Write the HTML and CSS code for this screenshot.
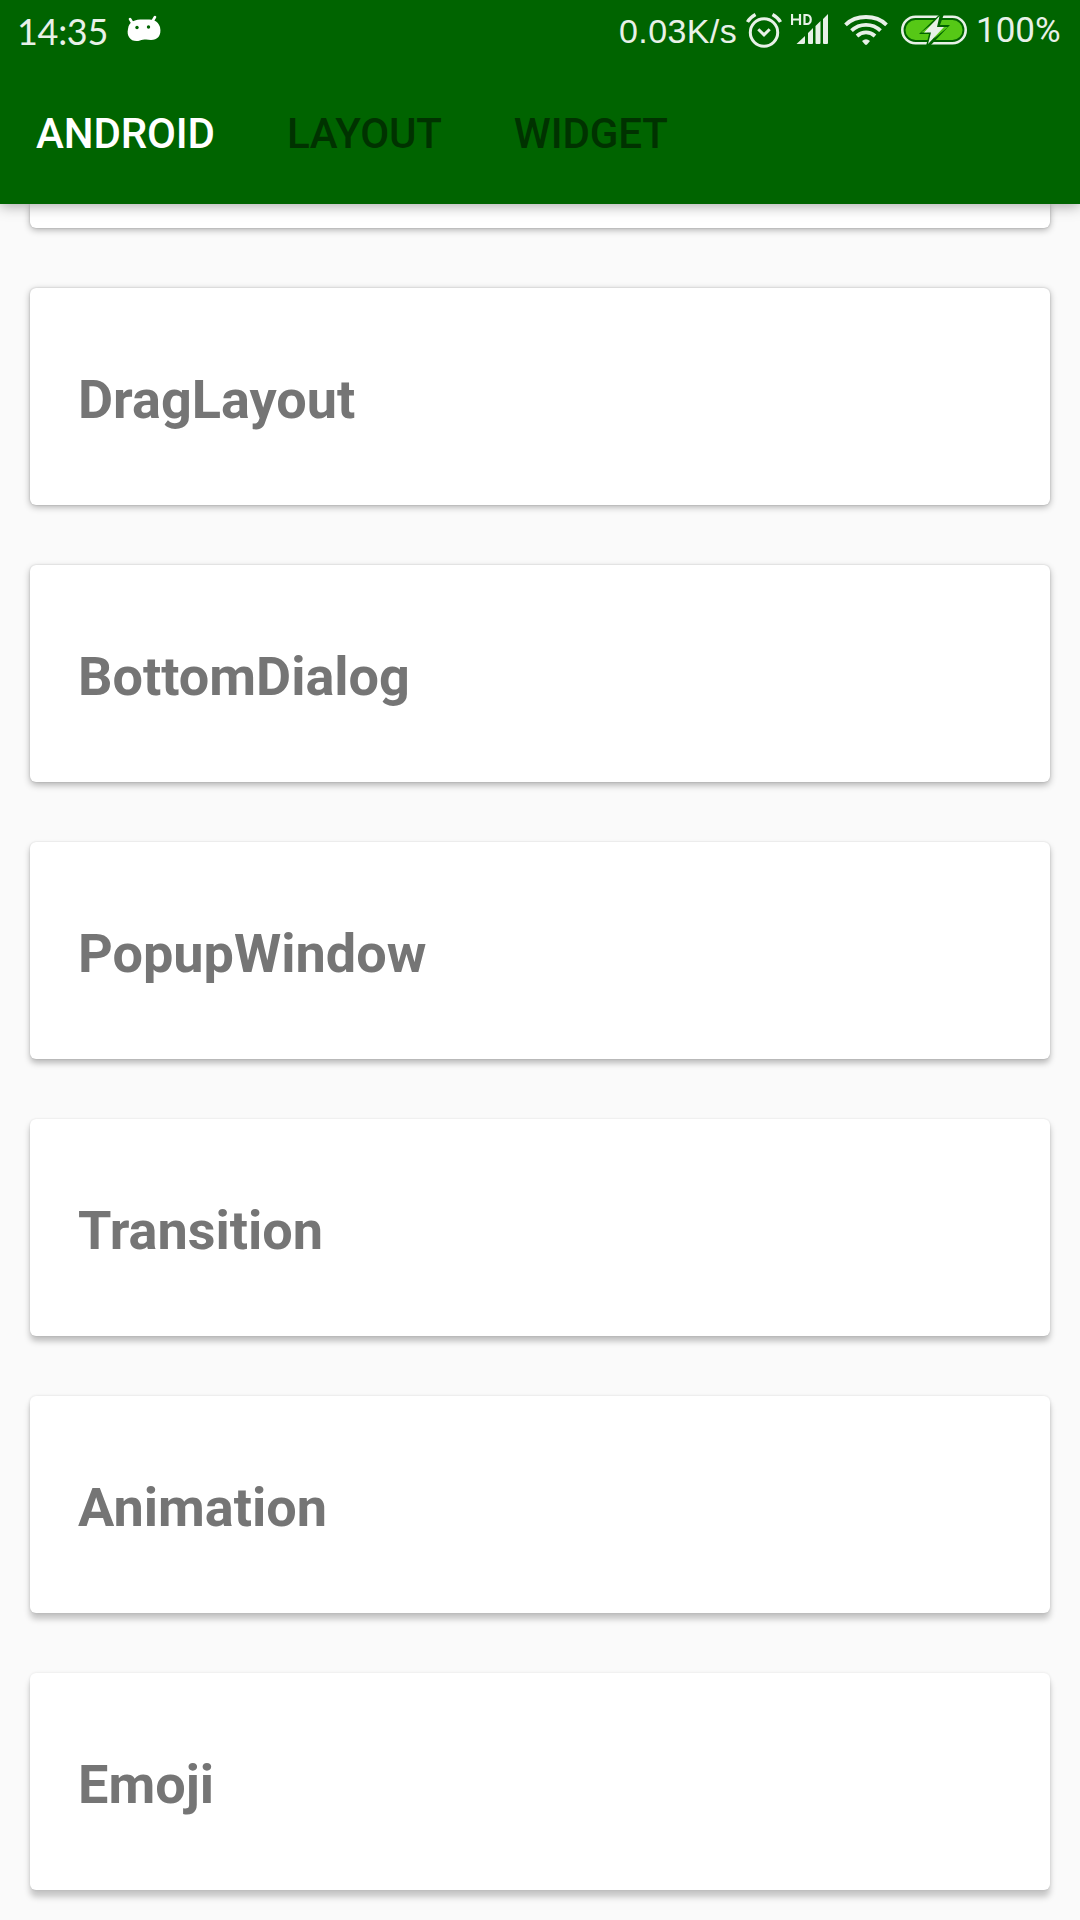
FILE: index.html
```html
<!DOCTYPE html>
<html lang="en">
<head>
<meta charset="utf-8">
<title>Android</title>
<link rel="stylesheet" href="styles.css">
</head>
<body>
<header class="appbar">
  <div class="status">
    <span class="clock">14:35</span>
    <svg class="droid" width="36" height="28" viewBox="0 0 36 28">
      <path d="M4 4l3 5M29 2l-3 5" stroke="#fff" stroke-width="2.6" stroke-linecap="round"/>
      <path d="M2 14C3 6 9 4.500 17 4.500S31 3.500 34 12C36 21 31 25 25 25C20 24 17 24.500 14 25.500C6 28 0 22 2 14Z" fill="#fff"/>
      <circle cx="11" cy="12.500" r="1.700" fill="#006400"/><circle cx="22.500" cy="12" r="1.700" fill="#006400"/>
    </svg>
    <span class="speed">0.03K/s</span>
    <svg class="alarm" width="36" height="36" viewBox="0 0 36 36" fill="none" stroke="#e8f1e8" stroke-width="3">
      <circle cx="18" cy="20.500" r="13.700"/>
      <path d="M1.500 10Q4 5.500 9.500 2.500M26.500 2.500Q32 5.500 34.500 10" stroke-width="3.400"/>
      <path d="M12.300 17.200l5.700 5.600 5.700-5.600" stroke-width="3"/>
    </svg>
    <svg class="signal" width="38" height="34" viewBox="0 0 38 34" fill="#e8f1e8">
      <path d="M1 2v11M9 2v11M1 7.500h8M13.500 3v9h2.500c5 0 5-9 0-9z" fill="none" stroke="#e8f1e8" stroke-width="2.200"/>
      <path d="M5.500 32L14 24v6.500q0 1.500-1.500 1.500zM17 21l5-5v15q0 1-1 1h-3q-1 0-1-1zM24.500 14l5-5v22q0 1-1 1h-3q-1 0-1-1zM32 7l5-5v29q0 1-1 1h-3q-1 0-1-1z"/>
    </svg>
    <svg class="wifi" width="44" height="32" viewBox="0 0 44 32" fill="none" stroke="#e8f1e8" stroke-width="3.800">
      <path d="M1.500 10.800Q9.500 3 22 3T42.500 10.800M7.500 16.700Q13.500 10.800 22 10.800T36.500 16.700M13 22Q17 18.400 22 18.400T31 22"/>
      <path d="M18 27Q22 23.500 26 27L23 30.600Q22 31.500 21 30.600Z" fill="#e8f1e8" stroke="none"/>
    </svg>
    <svg class="battery" width="66" height="30" viewBox="0 0 66 30">
      <rect x="1.300" y="1.800" width="63.400" height="26.400" rx="13.200" fill="none" stroke="#e8f1e8" stroke-width="2.600"/>
      <rect x="4.500" y="5" width="57" height="20" rx="10" fill="#56c816"/>
      <path d="M39 -1L18 19H28L25 31H29L49 10H39L43 -1Z" fill="#006400"/>
      <path d="M33 7.500L20 17.500H26L28.500 14ZM33 23.500L47 12H40L37 15Z" fill="#56c816"/>
      <path d="M38.500 1L23 17.500H30L27 29L43 12H36Z" fill="#e8f1e8"/>
    </svg>
    <span class="percent">100%</span>
  </div>
  <nav class="tabs">
    <span class="tab active">ANDROID</span>
    <span class="tab">LAYOUT</span>
    <span class="tab">WIDGET</span>
  </nav>
</header>
<main class="list">
  <div class="card peek"></div>
  <div class="card lift1">DragLayout</div>
  <div class="card lift2">BottomDialog</div>
  <div class="card lift3">PopupWindow</div>
  <div class="card lift4">Transition</div>
  <div class="card lift5">Animation</div>
  <div class="card lift6">Emoji</div>
</main>
</body>
</html>
```
FILE: styles.css
```css
* { box-sizing: border-box; }
body {
  margin: 0;
  width: 1080px;
  height: 1920px;
  overflow: hidden;
  background: #fafafa;
  font-family: Roboto, sans-serif;
}
.appbar {
  position: relative;
  z-index: 1;
  height: 204px;
  background: #006400;
  box-shadow: 0 2px 13px rgba(0, 0, 0, .34);
}
.status {
  display: flex;
  align-items: flex-start;
  height: 96px;
  color: #e8f1e8;
  white-space: nowrap;
}
.clock, .speed, .percent { line-height: 40px; }
.clock {
  width: 109px;
  padding-left: 17px;
  margin-top: 11px;
  font-family: Lato, sans-serif;
  font-size: 36px;
  letter-spacing: -.3px;
}
.droid { margin: 15px 0 0 17px; }
.speed {
  width: 121px;
  margin: 11px 0 0 457px;
  font-size: 34px;
  letter-spacing: .4px;
  font-family: "Liberation Sans", sans-serif;
}
.alarm { margin: 12px 0 0 6px; }
.signal { margin: 12px 0 0 9px; }
.wifi { margin: 14px 0 0 15px; }
.battery { margin: 15px 0 0 13px; }
.percent {
  margin: 11px 0 0 9px;
  font-size: 35px;
}
.tabs { display: flex; }
.tab {
  padding: 0 36px;
  font-size: 42px;
  font-weight: 500;
  line-height: 76px;
  letter-spacing: -.12px;
  color: #003200;
}
.active { color: #fff; }
.list {
  display: flex;
  flex-direction: column;
  gap: 60px;
  padding: 0 30px;
}
.card {
  display: flex;
  align-items: center;
  flex: none;
  height: 217px;
  padding: 6px 48px 0;
  border-radius: 6px;
  background: #fff;
  color: #757575;
  font-size: 54px;
  font-weight: 700;
  box-shadow: 0 2px 7px rgba(0, 0, 0, .3), 0 0 2px rgba(0, 0, 0, .2);
}
.peek { height: 24px; border-radius: 0 0 6px 6px; }
.lift2 { box-shadow: 0 3px 7px rgba(0, 0, 0, .29), 0 0 2px rgba(0, 0, 0, .17); }
.lift3 { box-shadow: 0 4px 6px rgba(0, 0, 0, .27), 0 0 2px rgba(0, 0, 0, .14); }
.lift4 { box-shadow: 0 5px 6px rgba(0, 0, 0, .25), 0 0 2px rgba(0, 0, 0, .12); }
.lift5 { box-shadow: 0 6px 6px rgba(0, 0, 0, .22), 0 0 3px rgba(0, 0, 0, .12); }
.lift6 { box-shadow: 0 7px 6px rgba(0, 0, 0, .21), 0 0 3px rgba(0, 0, 0, .1); }
```
